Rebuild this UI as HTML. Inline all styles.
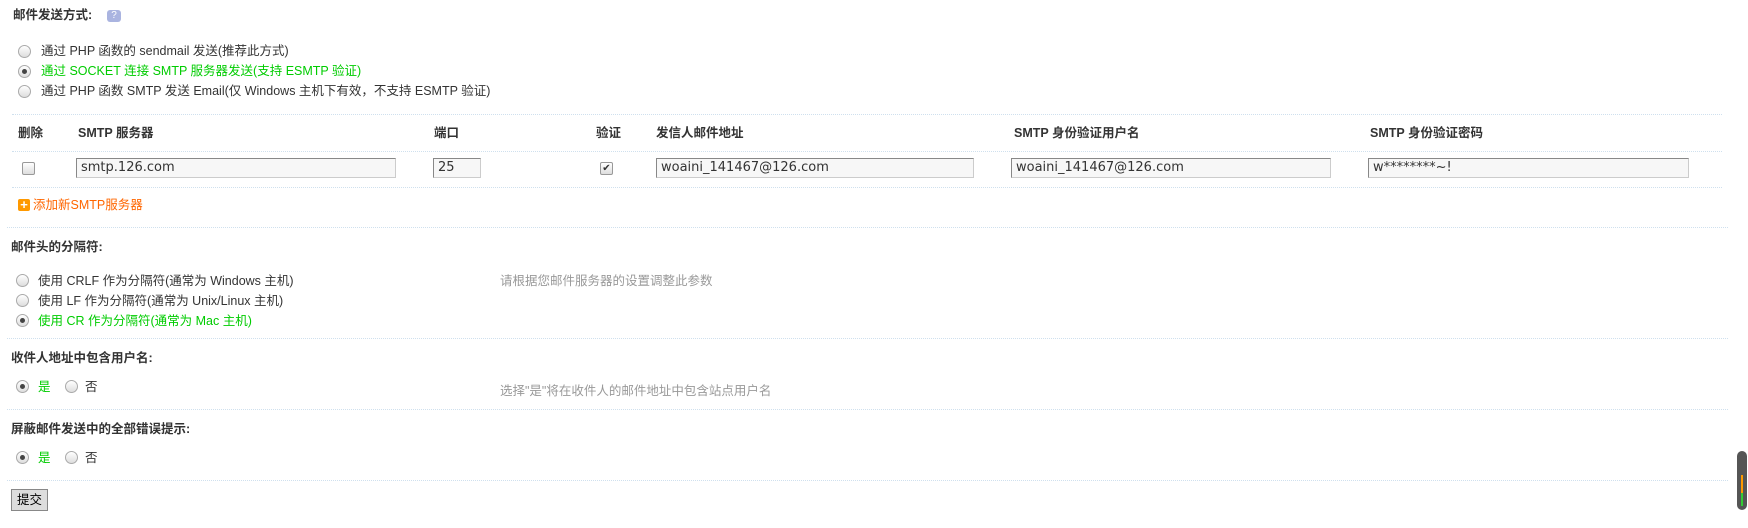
<!DOCTYPE html>
<html><head><meta charset="utf-8"><style>
body{margin:0;width:1748px;height:528px;background:#fff;font-family:"Liberation Sans","Noto Sans CJK SC",sans-serif;font-size:12.5px;color:#333;position:relative;overflow:hidden}
.a{position:absolute;white-space:nowrap;line-height:15px}
.b{font-weight:bold;color:#333}
.g{color:#00cc00}
.o{color:#f60}
.h{color:#999}
.ln{position:absolute;height:0;border-top:1px dotted #cfe0ee}
.r{position:absolute;width:11px;height:11px;border-radius:50%;border:1px solid #aaa;background:linear-gradient(#fff,#ddd)}
.r.on::after{content:"";position:absolute;left:3px;top:3px;width:5px;height:5px;border-radius:50%;background:#444}
.in{position:absolute;height:18px;border:1px solid #888;border-right-color:#ccc;border-bottom-color:#ccc;background:#f7f7f7;font-size:13px;line-height:18px;padding-left:4px;color:#333;font-family:"DejaVu Sans","Liberation Sans",sans-serif}
.cb{position:absolute;width:11px;height:11px;border:1px solid #999;border-radius:2px;background:linear-gradient(#fff,#ddd)}
</style></head><body>
<div class="a b" style="left:13px;top:8px">邮件发送方式:</div>
<div class="a" style="left:107px;top:10px;width:14px;height:12px;border-radius:3px;background:#aab4e0;color:#fff;font-size:10px;line-height:12px;text-align:center">?</div>

<div class="r" style="left:18px;top:45px"></div><div class="a" style="left:41px;top:44px">通过 PHP 函数的 sendmail 发送(推荐此方式)</div>
<div class="r on" style="left:18px;top:65px"></div><div class="a g" style="left:41px;top:64px">通过 SOCKET 连接 SMTP 服务器发送(支持 ESMTP 验证)</div>
<div class="r" style="left:18px;top:85px"></div><div class="a" style="left:41px;top:84px">通过 PHP 函数 SMTP 发送 Email(仅 Windows 主机下有效，不支持 ESMTP 验证)</div>

<div class="ln" style="left:12px;top:114px;width:1710px"></div>
<div class="a b" style="left:18px;top:126px">删除</div>
<div class="a b" style="left:78px;top:126px">SMTP 服务器</div>
<div class="a b" style="left:434px;top:126px">端口</div>
<div class="a b" style="left:596px;top:126px">验证</div>
<div class="a b" style="left:656px;top:126px">发信人邮件地址</div>
<div class="a b" style="left:1014px;top:126px">SMTP 身份验证用户名</div>
<div class="a b" style="left:1370px;top:126px">SMTP 身份验证密码</div>
<div class="ln" style="left:12px;top:151px;width:1710px"></div>

<div class="cb" style="left:22px;top:162px"></div>
<div class="in" style="left:76px;top:158px;width:314px">smtp.126.com</div>
<div class="in" style="left:433px;top:158px;width:42px">25</div>
<div class="cb" style="left:600px;top:162px;font-size:10px;line-height:11px;text-align:center">✔</div>
<div class="in" style="left:656px;top:158px;width:312px">woaini_141467@126.com</div>
<div class="in" style="left:1011px;top:158px;width:314px">woaini_141467@126.com</div>
<div class="in" style="left:1368px;top:158px;width:315px">w********~!</div>
<div class="ln" style="left:12px;top:187px;width:1710px"></div>

<div class="a" style="left:18px;top:199px;width:12px;height:12px;background:#f90;border-radius:2px;color:#fff;font-weight:bold;font-size:13px;line-height:12px;text-align:center">+</div>
<div class="a o" style="left:33px;top:198px">添加新SMTP服务器</div>
<div class="ln" style="left:7px;top:227px;width:1721px"></div>

<div class="a b" style="left:11px;top:240px">邮件头的分隔符:</div>
<div class="r" style="left:16px;top:274px"></div><div class="a" style="left:38px;top:274px">使用 CRLF 作为分隔符(通常为 Windows 主机)</div>
<div class="r" style="left:16px;top:294px"></div><div class="a" style="left:38px;top:294px">使用 LF 作为分隔符(通常为 Unix/Linux 主机)</div>
<div class="r on" style="left:16px;top:314px"></div><div class="a g" style="left:38px;top:314px">使用 CR 作为分隔符(通常为 Mac 主机)</div>
<div class="a h" style="left:500px;top:274px">请根据您邮件服务器的设置调整此参数</div>
<div class="ln" style="left:7px;top:338px;width:1721px"></div>

<div class="a b" style="left:11px;top:351px">收件人地址中包含用户名:</div>
<div class="r on" style="left:16px;top:380px"></div><div class="a g" style="left:38px;top:380px">是</div>
<div class="r" style="left:65px;top:380px"></div><div class="a" style="left:85px;top:380px">否</div>
<div class="a h" style="left:500px;top:384px">选择"是"将在收件人的邮件地址中包含站点用户名</div>
<div class="ln" style="left:7px;top:409px;width:1721px"></div>

<div class="a b" style="left:11px;top:422px">屏蔽邮件发送中的全部错误提示:</div>
<div class="r on" style="left:16px;top:451px"></div><div class="a g" style="left:38px;top:451px">是</div>
<div class="r" style="left:65px;top:451px"></div><div class="a" style="left:85px;top:451px">否</div>
<div class="ln" style="left:7px;top:480px;width:1721px"></div>

<div class="a" style="left:11px;top:489px;width:35px;height:20px;border:1px solid #888;background:#ddd;line-height:20px;text-align:center;color:#000">提交</div>

<div class="a" style="left:1737px;top:451px;width:10px;height:59px;background:#555;border-radius:5px"></div>
<div class="a" style="left:1741px;top:475px;width:2px;height:18px;background:#f90"></div>
<div class="a" style="left:1741px;top:493px;width:2px;height:13px;background:#3c3"></div>
</body></html>
